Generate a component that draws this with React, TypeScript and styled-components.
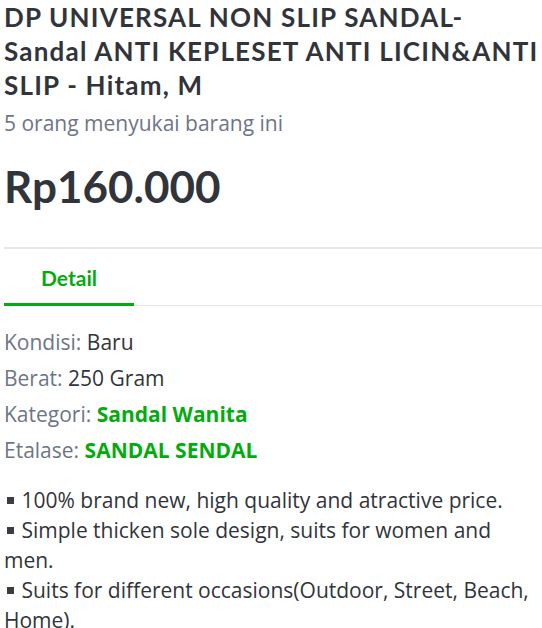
import React from "react";
import styled, { createGlobalStyle } from "styled-components";

const Global = createGlobalStyle`
  body { margin: 0; background: #fff; }
`;

const Page = styled.div`
  padding: 0 0 0 4px;
  width: 542px;
  box-sizing: border-box;
  font-family: "Open Sans", sans-serif;
  color: #31353b;
`;

const Title = styled.h1`
  margin: 0;
  font-family: Lato, "Noto Sans", sans-serif;
  font-weight: 700;
  font-size: 26px;
  letter-spacing: 1.2px;
  line-height: 34px;
  color: #31353b;
`;

const Likes = styled.div`
  font-size: 21px;
  line-height: 30px;
  color: #6d7588;
  margin-top: 6px;
`;

const Price = styled.div`
  font-family: Lato, "Noto Sans", sans-serif;
  font-weight: 700;
  font-size: 44px;
  line-height: 53px;
  color: #31353b;
  margin-top: 22px;
`;

const Divider = styled.hr`
  border: none;
  height: 2px;
  background: #e4e6e8;
  margin: 34px 0 0;
`;

const Tabs = styled.div`
  display: flex;
  border-bottom: 1px solid #e4e6e8;
`;

const Tab = styled.div<{ $active?: boolean }>`
  width: 130px;
  text-align: center;
  font-family: Lato, "Noto Sans", sans-serif;
  font-weight: 700;
  font-size: 21px;
  line-height: 24px;
  padding: 17px 0 13px;
  color: ${(p) => (p.$active ? "#03ac0e" : "#6d7588")};
  border-bottom: 3px solid ${(p) => (p.$active ? "#03ac0e" : "transparent")};
  margin-bottom: -1px;
`;

const Specs = styled.ul`
  list-style: none;
  margin: 0;
  padding: 18px 0 0;
`;

const Spec = styled.li`
  font-size: 21px;
  line-height: 36px;
  color: #31353b;
`;

const Label = styled.span`
  color: #6d7588;
`;

const Link = styled.span`
  color: #03ac0e;
  font-weight: 700;
`;

const Desc = styled.div`
  margin-top: 17px;
  font-size: 21px;
  line-height: 30px;
  color: #31353b;
`;

const Line = styled.div``;

const Bullet = styled.span`
  display: inline-block;
  width: 7px;
  height: 7px;
  margin: 0 2px 0 3px;
  background: #3a3d42;
  vertical-align: 4px;
`;

const points = [
  "100% brand new, high quality and atractive price.",
  "Simple thicken sole design, suits for women and men.",
  "Suits for different occasions(Outdoor, Street, Beach, Home).",
];

export default function App() {
  return (
    <Page>
      <Global />
      <Title>
        DP UNIVERSAL NON SLIP SANDAL-
        <br />
        Sandal ANTI KEPLESET ANTI LICIN&amp;ANTI
        <br />
        SLIP - Hitam, M
      </Title>
      <Likes>5 orang menyukai barang ini</Likes>
      <Price>Rp160.000</Price>
      <Divider />
      <Tabs>
        <Tab $active>Detail</Tab>
      </Tabs>
      <Specs>
        <Spec><Label>Kondisi: </Label>Baru</Spec>
        <Spec><Label>Berat: </Label>250 Gram</Spec>
        <Spec><Label>Kategori: </Label><Link>Sandal Wanita</Link></Spec>
        <Spec><Label>Etalase: </Label><Link>SANDAL SENDAL</Link></Spec>
      </Specs>
      <Desc>
        {points.map((p) => (
          <Line key={p}>
            <Bullet /> {p}
          </Line>
        ))}
      </Desc>
    </Page>
  );
}
